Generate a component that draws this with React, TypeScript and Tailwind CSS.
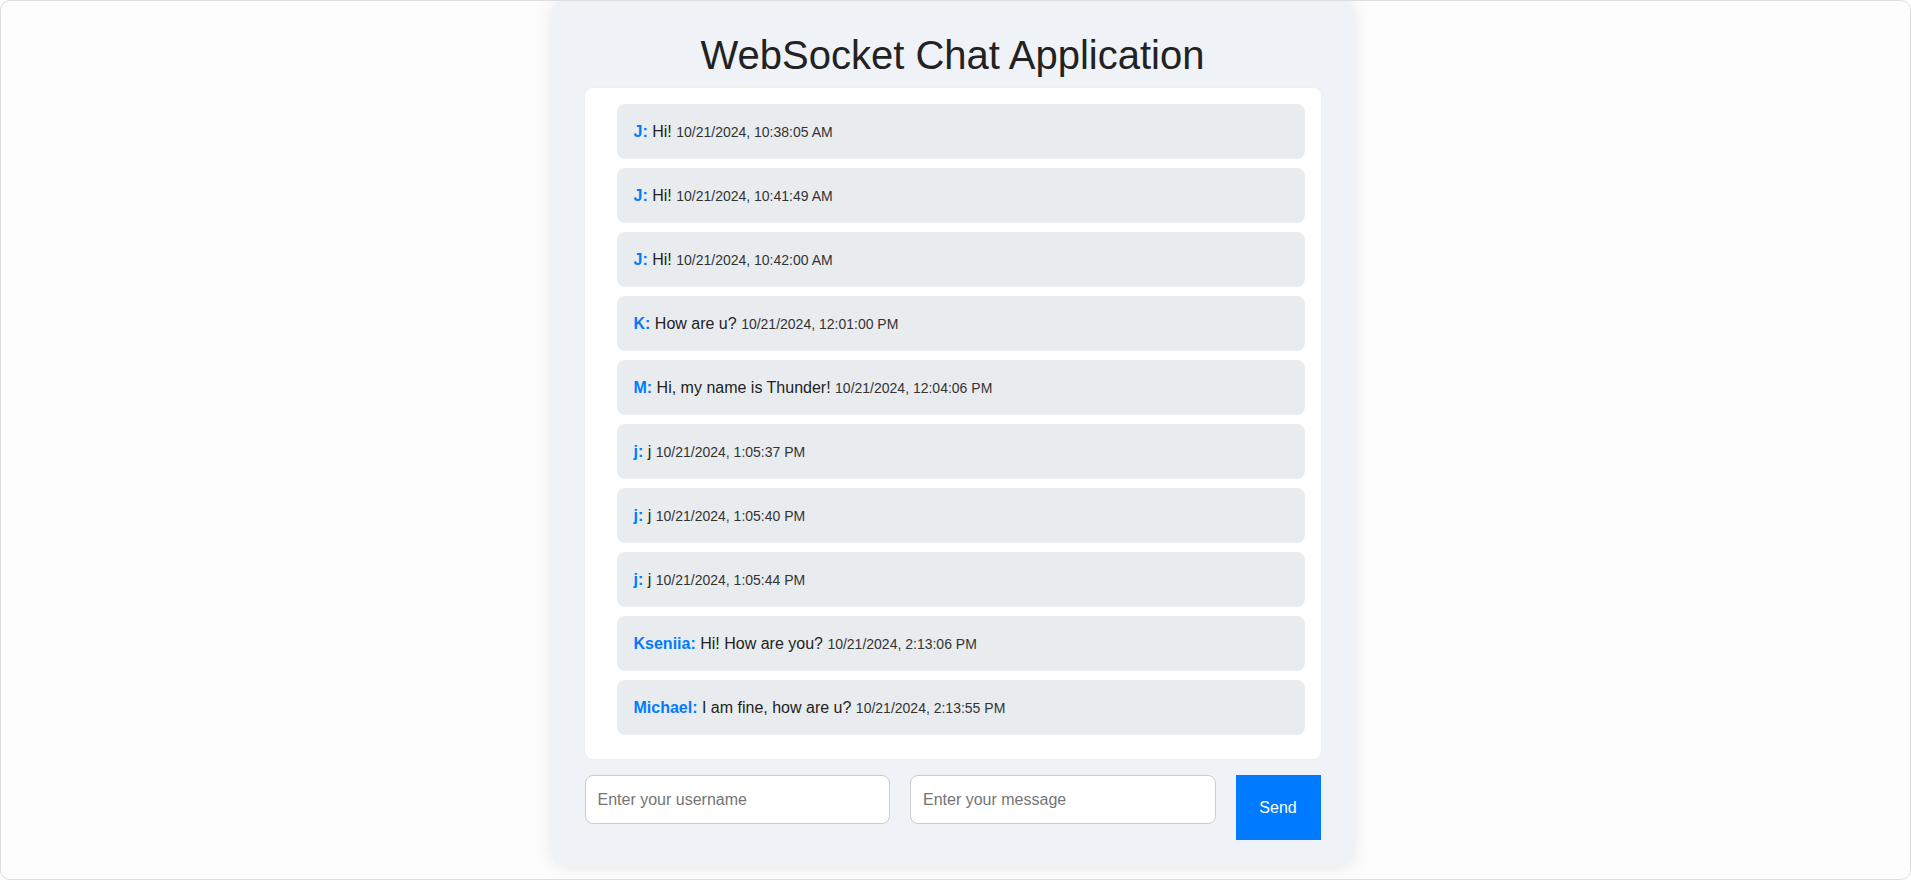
import React from "react";

interface Message {
  user: string;
  text: string;
  time: string;
}

const messages: Message[] = [
  { user: "J", text: "Hi!", time: "10/21/2024, 10:38:05 AM" },
  { user: "J", text: "Hi!", time: "10/21/2024, 10:41:49 AM" },
  { user: "J", text: "Hi!", time: "10/21/2024, 10:42:00 AM" },
  { user: "K", text: "How are u?", time: "10/21/2024, 12:01:00 PM" },
  { user: "M", text: "Hi, my name is Thunder!", time: "10/21/2024, 12:04:06 PM" },
  { user: "j", text: "j", time: "10/21/2024, 1:05:37 PM" },
  { user: "j", text: "j", time: "10/21/2024, 1:05:40 PM" },
  { user: "j", text: "j", time: "10/21/2024, 1:05:44 PM" },
  { user: "Kseniia", text: "Hi! How are you?", time: "10/21/2024, 2:13:06 PM" },
  { user: "Michael", text: "I am fine, how are u?", time: "10/21/2024, 2:13:55 PM" },
];

function MessageItem({ msg }: { msg: Message }) {
  return (
    <div className="flex h-[55px] items-center rounded-lg bg-[#e9ecef] pl-[17px] pr-4 text-[16px] text-[#222]">
      <p className="leading-none">
        <span className="font-bold text-[#007bff]">{msg.user}:</span> {msg.text}{" "}
        <span className="text-[14px] text-[#333]">{msg.time}</span>
      </p>
    </div>
  );
}

export default function App() {
  return (
    <div
      className="h-[880px] w-full overflow-hidden rounded-[10px] border border-[#dedede] bg-[#fdfdfd] pr-[6px]"
      style={{ fontFamily: '"Liberation Sans", Arial, sans-serif' }}
    >
      <div className="mx-auto -mt-px w-[800px] rounded-xl bg-[#eff2f6] px-8 pt-8 pb-[26px] shadow-[0_0_20px_rgba(0,0,0,0.1)]">
        <h1 className="mb-[10px] text-center text-[40px] leading-[46px] text-[#222]">
          WebSocket Chat Application
        </h1>

        <div className="flex flex-col gap-[9px] rounded-lg bg-white pt-4 pr-4 pb-6 pl-8 shadow-[0_0_3px_rgba(0,0,0,0.04)]">
          {messages.map((m, i) => (
            <MessageItem key={i} msg={m} />
          ))}
        </div>

        <div className="mt-4 flex items-start gap-5">
          <input
            type="text"
            placeholder="Enter your username"
            className="h-[49px] min-w-0 flex-1 rounded-lg border border-[#ccc] bg-white px-3 text-[16px] text-[#222] outline-none placeholder:text-[#757575]"
          />
          <input
            type="text"
            placeholder="Enter your message"
            className="h-[49px] min-w-0 flex-1 rounded-lg border border-[#ccc] bg-white px-3 text-[16px] text-[#222] outline-none placeholder:text-[#757575]"
          />
          <button className="h-[65px] w-[85px] bg-[#007bff] text-[16px] text-white">Send</button>
        </div>
      </div>
    </div>
  );
}
